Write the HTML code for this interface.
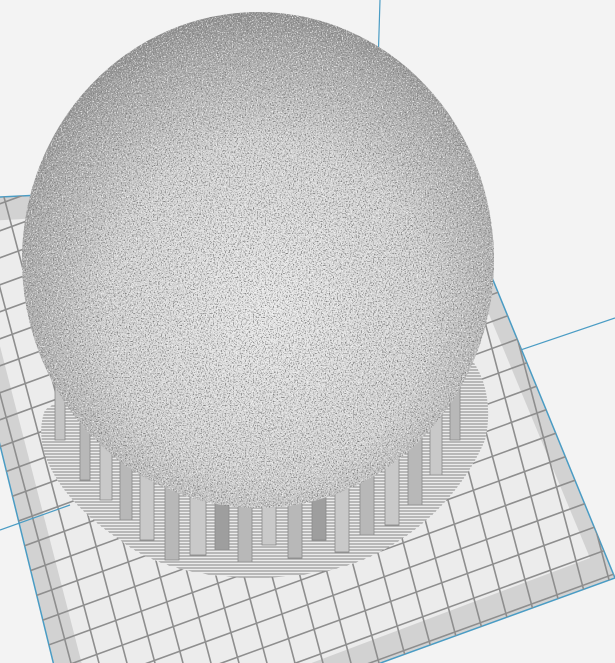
<!DOCTYPE html>
<html><head><style>html,body{margin:0;padding:0;background:#f3f3f3;overflow:hidden;width:615px;height:663px}svg{display:block}</style></head>
<body>
<svg width="615" height="663" viewBox="0 0 615 663" xmlns="http://www.w3.org/2000/svg">
<defs>
<clipPath id="plate"><polygon points="-60,200 450,175 615,578 80,772"/></clipPath>
<radialGradient id="sph" cx="0.52" cy="0.6" r="0.62">
<stop offset="0" stop-color="#e8e8e8"/><stop offset="0.55" stop-color="#d2d2d2"/><stop offset="0.85" stop-color="#a8a8a8"/><stop offset="1" stop-color="#888"/>
</radialGradient>
<filter id="noise" x="0" y="0" width="1" height="1">
<feTurbulence type="fractalNoise" baseFrequency="0.75" numOctaves="2" seed="3"/>
<feColorMatrix type="matrix" values="0 0 0 0 0.2  0 0 0 0 0.2  0 0 0 0 0.2  5 0 0 0 -2.6"/>
<feComposite in2="SourceGraphic" operator="in"/>
</filter>
<filter id="noise2" x="0" y="0" width="1" height="1">
<feTurbulence type="fractalNoise" baseFrequency="0.8" numOctaves="2" seed="9"/>
<feColorMatrix type="matrix" values="0 0 0 0 1  0 0 0 0 1  0 0 0 0 1  5 0 0 0 -2.7"/>
<feComposite in2="SourceGraphic" operator="in"/>
</filter>
<pattern id="hatch" width="4" height="3" patternUnits="userSpaceOnUse"><rect width="4" height="3" fill="#ececec"/><path d="M0 1H4" stroke="#555" stroke-width="0.7"/></pattern>
</defs>
<rect width="615" height="663" fill="#f3f3f3"/>
<line x1="380" y1="0" x2="378" y2="65" stroke="#4a9cc4" stroke-width="1.2"/>
<line x1="485" y1="362" x2="615" y2="318" stroke="#4a9cc4" stroke-width="1.2"/>
<polygon points="-60,200 450,175 615,578 80,772" fill="#d2d2d2" stroke="#4a9cc4" stroke-width="1.5"/>
<polygon points="-32,222 440,196 590,558 102,742" fill="#ececec"/>
<g clip-path="url(#plate)" stroke="#8e8e8e" stroke-width="1.6" fill="none">
<path d="M-160,0 l190,720 M-132,0 l190,720 M-104,0 l190,720 M-76,0 l190,720 M-48,0 l190,720 M-20,0 l190,720 M8,0 l190,720 M36,0 l190,720 M64,0 l190,720 M92,0 l190,720 M120,0 l190,720 M148,0 l190,720 M176,0 l190,720 M204,0 l190,720 M232,0 l190,720 M260,0 l190,720 M288,0 l190,720 M316,0 l190,720 M344,0 l190,720 M372,0 l190,720 M400,0 l190,720 M428,0 l190,720 M456,0 l190,720 M484,0 l190,720"/>
<path d="M-20,184 l700,-255 M-20,211 l700,-255 M-20,238 l700,-255 M-20,265 l700,-255 M-20,292 l700,-255 M-20,319 l700,-255 M-20,346 l700,-255 M-20,373 l700,-255 M-20,400 l700,-255 M-20,427 l700,-255 M-20,454 l700,-255 M-20,481 l700,-255 M-20,508 l700,-255 M-20,535 l700,-255 M-20,562 l700,-255 M-20,589 l700,-255 M-20,616 l700,-255 M-20,643 l700,-255 M-20,670 l700,-255 M-20,697 l700,-255 M-20,724 l700,-255 M-20,751 l700,-255 M-20,778 l700,-255 M-20,805 l700,-255 M-20,832 l700,-255 M-20,859 l700,-255 M-20,886 l700,-255 M-20,913 l700,-255"/>
</g>
<line x1="0" y1="530" x2="70" y2="505" stroke="#4a9cc4" stroke-width="1.2"/>
<path d="M45,410 C30,450 60,500 120,540 C170,580 260,585 330,570 C400,555 460,500 485,440 C495,400 480,360 460,350 L60,400 Z" fill="url(#hatch)"/>
<g fill="#b8b8b8" stroke="#8a8a8a" stroke-width="0.8">
<rect x="55" y="360" width="10" height="80" fill="#c4c4c4"/>
<rect x="80" y="400" width="10" height="80"/>
<rect x="100" y="420" width="12" height="80" fill="#c9c9c9"/>
<rect x="120" y="440" width="12" height="80"/>
<rect x="140" y="455" width="14" height="85" fill="#c9c9c9"/>
<rect x="165" y="470" width="14" height="90"/>
<rect x="190" y="480" width="16" height="75" fill="#c9c9c9"/>
<rect x="215" y="490" width="14" height="60" fill="#9e9e9e"/>
<rect x="238" y="492" width="14" height="70"/>
<rect x="262" y="490" width="14" height="55" fill="#c9c9c9"/>
<rect x="288" y="488" width="14" height="70"/>
<rect x="312" y="485" width="14" height="55" fill="#9e9e9e"/>
<rect x="335" y="482" width="14" height="70" fill="#c9c9c9"/>
<rect x="360" y="470" width="14" height="65"/>
<rect x="385" y="455" width="14" height="70" fill="#c9c9c9"/>
<rect x="408" y="435" width="14" height="70"/>
<rect x="430" y="410" width="12" height="65" fill="#c9c9c9"/>
<rect x="450" y="380" width="10" height="60"/>
</g>
<ellipse cx="258" cy="260" rx="236" ry="248" fill="url(#sph)"/>
<ellipse cx="258" cy="260" rx="236" ry="248" fill="#000" filter="url(#noise)"/>
<ellipse cx="258" cy="260" rx="236" ry="248" fill="#000" filter="url(#noise2)" opacity="0.8"/>
</svg>
</body></html>
